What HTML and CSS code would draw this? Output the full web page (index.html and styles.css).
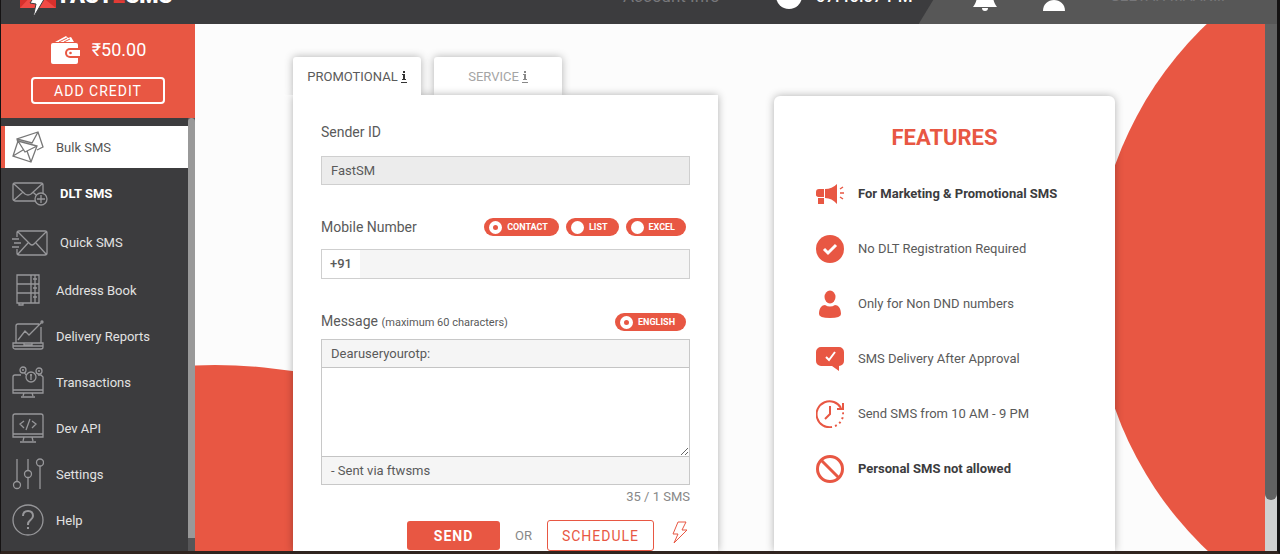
FILE: index.html
```html
<!DOCTYPE html>
<html lang="en">
<head>
<meta charset="utf-8">
<meta name="viewport" content="width=device-width, initial-scale=1">
<title>Fast2SMS - Bulk SMS</title>
<link rel="stylesheet" href="styles.css">
</head>
<body>
<div class="shell">
  <header class="topbar">
    <div class="topbar-inner">
      <a class="brand" href="#">
        <svg class="brand-mark" width="38" height="36" viewBox="0 0 38 36">
          <path d="M1 0h36v26H1z" fill="#d8302c"/>
          <path d="M1 26 14 12l9 3 14 11z" fill="#f04a45"/>
          <path d="M25 0 11 21l6 1-3 14 13-22-5-1 8-13z" fill="#fff" stroke="#3c3c3e"/>
        </svg>
        <span class="brand-name">FAST<span class="brand-accent">2</span>SMS</span>
      </a>
      <div class="status">
        <span class="muted">Account Info</span>
        <span class="clock"><svg width="26" height="26" viewBox="0 0 26 26"><circle cx="13" cy="13" r="13" fill="#fff"/></svg>07:46:57 PM</span>
      </div>
      <div class="account">
        <svg width="26" height="28" viewBox="0 0 26 28"><path d="M13 0c-6 1-8 5-8 10 0 6-1 9-4 13h24c-3-4-4-7-4-13 0-5-2-9-8-10zM10 24h6a3 3 0 0 1-6 0z" fill="#fff"/></svg>
        <svg width="24" height="28" viewBox="0 0 24 28"><circle cx="12" cy="8" r="7" fill="#fff"/><path d="M1 27c0-7 5-11 11-11s11 4 11 11z" fill="#fff"/></svg>
        <span class="muted user">GEETAH MAAN...</span>
      </div>
    </div>
  </header>

  <div class="body">
    <aside class="sidebar">
      <section class="wallet">
        <div class="balance">
          <svg width="30" height="28" viewBox="0 0 30 28">
            <path d="M5 6 16 0l2 2 3-1 3 5z" fill="#fff"/>
            <path d="M9 6l8-4M14 6l6-3" stroke="#e85743" fill="none"/>
            <rect x="1" y="7" width="27" height="21" rx="2" fill="#fff"/>
            <path d="M30 12H20a5 5 0 0 0 0 10h10z" fill="#e85743"/>
            <path d="M30 14H20a3 3 0 0 0 0 6h10z" fill="#fff"/>
            <circle cx="20.500" cy="17" r="1.300" fill="#e85743"/>
          </svg>
          <span>₹50.00</span>
        </div>
        <button class="add-credit" type="button">ADD CREDIT</button>
      </section>
      <div class="nav-wrap">
        <nav class="nav">
          <a class="nav-item active" href="#">
            <svg width="32" height="32" viewBox="0 0 32 32"><path d="M6 12 5 8 26 1l5 15-6 3M5 8l15 4 6-11M6 10l19 5-6 16L1 25zM6 10l7 11 12-6M1 25l10-6M15 20l4 11"/></svg>
            Bulk SMS</a>
          <a class="nav-item tall strong" href="#">
            <svg width="36" height="24" viewBox="0 0 36 24"><path d="M23 19H3a2 2 0 0 1-2-2V3a2 2 0 0 1 2-2h26a2 2 0 0 1 2 2v8M2 2l11 10q3 2 6 0L30 2M2 18l9-8M21 10l3 3"/><circle cx="29" cy="17" r="6"/><path d="M29 13v8M25 17h8"/></svg>
            DLT SMS</a>
          <a class="nav-item tall" href="#">
            <svg width="36" height="26" viewBox="0 0 36 26"><path d="M5 7V3a2 2 0 0 1 2-2h26a2 2 0 0 1 2 2v20a2 2 0 0 1-2 2H7a2 2 0 0 1-2-2v-4M6 2l12 12q2 2 4 0L34 2M6 24l10-11M34 24 24 13M0 9h7M2 13h7M0 17h7"/></svg>
            Quick SMS</a>
          <a class="nav-item" href="#">
            <svg width="32" height="32" viewBox="0 0 32 32"><path d="M5 1h22v28H5zM19 1v28M23 1v28M5 10h22M5 19h22M7 29v2h4v-2M21 5h4M21 14h4M21 23h4"/></svg>
            Address Book</a>
          <a class="nav-item" href="#">
            <svg width="32" height="32" viewBox="0 0 32 32"><path d="M27 4H6a2 2 0 0 0-2 2v17h25V7M1 23h30v4a2 2 0 0 1-2 2H3a2 2 0 0 1-2-2zM1 26h30M12 23v2h8v-2M6 20l7-9 4 4L29 3"/><circle cx="30" cy="2" r="1"/></svg>
            Delivery Reports</a>
          <a class="nav-item" href="#">
            <svg width="32" height="32" viewBox="0 0 32 32"><path d="M9 9H3a2 2 0 0 0-2 2v16h30V11l-2-2h-3M14 9l-2-3M1 24h30M12 27l-1 3M20 27l1 3M9 31h14"/><circle cx="19" cy="11" r="5"/><circle cx="11" cy="4" r="3"/><circle cx="27" cy="5" r="3"/><path d="M19 8v6M18 9h2M10 4h2M26 5h2"/></svg>
            Transactions</a>
          <a class="nav-item" href="#">
            <svg width="32" height="30" viewBox="0 0 32 30"><path d="M3 1h26a2 2 0 0 1 2 2v21H1V3a2 2 0 0 1 2-2zM1 21h30M12 24l-1 4M20 24l1 4M8 29h16M12 8l-4 3 4 4M20 8l4 3-4 4M18 6l-4 11"/></svg>
            Dev API</a>
          <a class="nav-item" href="#">
            <svg width="32" height="32" viewBox="0 0 32 32"><path d="M5 1v23M16 1v11M16 20v11M28 8v23"/><circle cx="5" cy="27" r="3.500"/><circle cx="16" cy="16" r="3.500"/><circle cx="28" cy="4.500" r="3.500"/></svg>
            Settings</a>
          <a class="nav-item" href="#">
            <svg width="32" height="32" viewBox="0 0 32 32"><circle cx="16" cy="16" r="15"/><path d="M11 12q0-5 5-5t5 5c0 4-5 4-5 8v1M16 23v2" stroke-width="2"/></svg>
            Help</a>
        </nav>
        <div class="nav-scroll"><div class="nav-thumb"></div></div>
      </div>
    </aside>

    <main class="main">
      <section class="compose">
        <div class="tabs">
          <button class="tab tab-active" type="button">PROMOTIONAL
            <svg width="6" height="13" viewBox="0 0 6 13"><path d="M2 0h2v2H2zM1 3h3v5h1v1H1V8h1V4H1zM0 11h6v1H0z"/></svg>
          </button>
          <button class="tab" type="button">SERVICE
            <svg width="6" height="13" viewBox="0 0 6 13"><path d="M2 0h2v2H2zM1 3h3v5h1v1H1V8h1V4H1zM0 11h6v1H0z"/></svg>
          </button>
        </div>
        <form class="card form">
          <label class="label" for="sender">Sender ID</label>
          <input class="field sender" id="sender" value="FastSM" readonly>

          <div class="label-row">
            <label class="label" for="mobile">Mobile Number</label>
            <div class="pills">
              <label class="pill"><input type="radio" name="source" checked>CONTACT</label>
              <label class="pill"><input type="radio" name="source">LIST</label>
              <label class="pill"><input type="radio" name="source">EXCEL</label>
            </div>
          </div>
          <div class="phone">
            <span class="code">+91</span>
            <input class="phone-input" id="mobile" type="tel">
          </div>

          <div class="label-row">
            <label class="label" for="message">Message <small>(maximum 60 characters)</small></label>
            <div class="pills">
              <label class="pill"><input type="radio" name="lang" checked>ENGLISH</label>
            </div>
          </div>
          <div class="message">
            <div class="affix">Dearuseryourotp:</div>
            <textarea class="text" id="message"></textarea>
            <div class="affix">- Sent via ftwsms</div>
          </div>
          <div class="counter">35 / 1 SMS</div>
          <div class="actions">
            <button class="btn send" type="button">SEND</button>
            <span class="or">OR</span>
            <button class="btn schedule" type="button">SCHEDULE</button>
            <svg class="bolt" width="16" height="24" viewBox="0 0 16 24"><path d="M6 1h8l-4 8h5L2 22l4-9H1z"/></svg>
          </div>
        </form>
      </section>

      <section class="card features">
        <h2 class="features-title">FEATURES</h2>
        <ul class="feature-list">
          <li class="feature strong">
            <svg width="28" height="28" viewBox="0 0 28 28"><path d="M8 9v8H3a2.500 2.500 0 0 1-3-3v-2q0-3 3-3zM9 9q7 0 12-5v20q-5-6-12-6zM2 18h6v6H2z"/><path d="m24 9 3-2M24 13h4M24 17l3 2" stroke="#e85743" stroke-width="1.500"/></svg>
            For Marketing &amp; Promotional SMS</li>
          <li class="feature">
            <svg width="28" height="28" viewBox="0 0 28 28"><circle cx="14" cy="14" r="14"/><path d="m8 14 4 4 8-8" fill="none" stroke="#fff" stroke-width="3"/></svg>
            No DLT Registration Required</li>
          <li class="feature">
            <svg width="28" height="28" viewBox="0 0 28 28"><ellipse cx="14" cy="7" rx="5.500" ry="6.500"/><path d="M3 24c0-6 3-9 6-9q5 3 10 0c3 0 6 3 6 9q0 4-11 4T3 24z"/></svg>
            Only for Non DND numbers</li>
          <li class="feature">
            <svg width="28" height="28" viewBox="0 0 28 28"><path d="M5 2h18a5 5 0 0 1 5 5v9a5 5 0 0 1-5 5v5l-7-5H5a5 5 0 0 1-5-5V7a5 5 0 0 1 5-5z"/><path d="m10 12 3 3 6-8" fill="none" stroke="#fff" stroke-width="2"/></svg>
            SMS Delivery After Approval</li>
          <li class="feature">
            <svg width="28" height="28" viewBox="0 0 28 28"><g fill="none" stroke="#e85743" stroke-width="2"><path d="M16 27A13 13 0 1 1 25 8"/><path d="M27 3v6h-6M14 6v8l-5 5"/><path d="M19 26A13 13 0 0 0 27 12" stroke-dasharray="2 3"/></g></svg>
            Send SMS from 10 AM - 9 PM</li>
          <li class="feature strong">
            <svg width="28" height="28" viewBox="0 0 28 28"><g fill="none" stroke="#e85743" stroke-width="3"><circle cx="14" cy="14" r="12.500"/><path d="m5 5 18 18"/></g></svg>
            Personal SMS not allowed</li>
        </ul>
      </section>
    </main>

    <div class="page-scroll"><div class="page-thumb"></div></div>
  </div>
</div>
</body>
</html>
```
FILE: styles.css
```css
* { box-sizing: border-box; }

body {
  margin: 0;
  font-family: Roboto, "Liberation Sans", sans-serif;
  font-size: 14px;
  color: #5a5a5a;
  background: #000;
}

button, input, textarea { font: inherit; color: inherit; }
button { cursor: pointer; }
a { text-decoration: none; }
svg { flex: none; display: block; }

.shell {
  height: 100vh;
  display: flex;
  flex-direction: column;
  overflow: hidden;
  border: solid #151313;
  border-width: 0 3px 0 1px;
  border-bottom: 3px solid #30241f;
}

/* Top bar, scrolled partly out of view */
.topbar {
  flex: none;
  height: 24px;
  overflow: hidden;
  background: #3c3c3e;
}
.topbar-inner {
  height: 56px;
  margin-top: -32px;
  display: flex;
  align-items: center;
  color: #fff;
}
.brand {
  flex: 1;
  display: flex;
  align-items: center;
  gap: 3px;
  padding-left: 18px;
  color: #fff;
}
.brand-mark { margin-top: 8px; }
.brand-name { font-size: 22px; line-height: 24px; font-weight: 900; }
.brand-accent { color: #e23b35; }
.status {
  display: flex;
  align-items: center;
  gap: 56px;
  padding-right: 6px;
}
.clock { display: flex; align-items: center; gap: 14px; font-size: 17px; font-weight: 500; }
.muted { color: #77777a; font-size: 17px; }
.muted.user { font-size: 15px; }
.account {
  align-self: stretch;
  display: flex;
  align-items: center;
  gap: 44px;
  padding: 0 52px 0 53px;
  background: #575757;
  clip-path: polygon(34px 0, 100% 0, 100% 100%, 0 100%);
}
.account svg { margin-top: 4px; }

.body { flex: 1; min-height: 0; display: flex; }

/* Sidebar */
.sidebar {
  flex: none;
  width: 194px;
  display: flex;
  flex-direction: column;
  background: #3c3c3e;
}
.wallet {
  flex: none;
  height: 94px;
  padding-top: 12px;
  display: flex;
  flex-direction: column;
  align-items: center;
  gap: 13px;
  background: #e85743;
  color: #fff;
}
.balance { display: flex; align-items: center; gap: 12px; font-size: 18px; line-height: 28px; }
.add-credit {
  width: 134px;
  height: 27px;
  padding: 0;
  border: 2px solid #fff;
  border-radius: 4px;
  background: none;
  font-size: 14px;
  line-height: 22px;
  letter-spacing: 1px;
}
.nav-wrap { flex: 1; min-height: 0; display: flex; overflow: hidden; }
.nav { flex: 1; padding-top: 8px; }
.nav-item {
  height: 46px;
  display: flex;
  align-items: center;
  gap: 12px;
  padding-left: 11px;
  color: #e2e2e2;
  font-size: 13px;
}
.nav-item svg { fill: none; stroke: #97979a; stroke-width: 1.3; }
.nav-item.tall { height: 49px; }
.nav-item.strong { color: #fff; font-weight: 700; }
.nav-item.active {
  height: 42px;
  margin-bottom: 1px;
  padding-left: 7px;
  border-left: 4px solid #e85743;
  background: #fff;
  color: #555;
}
.nav-item.active svg { stroke: #777; }
.nav-scroll { width: 7px; background: #565658; }
.nav-thumb { height: calc(100% - 13px); border-radius: 4px 4px 0 0; background: #999; }

/* Main area */
.main {
  flex: 1;
  position: relative;
  overflow: hidden;
  display: grid;
  grid-template-columns: 425fr 341fr;
  gap: 56px;
  padding: 33px 150px 0 98px;
  background: #fcfcfc;
}
.main::before, .main::after {
  content: "";
  position: absolute;
  border-radius: 50%;
  background: #e85743;
}
.main::before { width: 1000px; height: 1000px; left: -480px; top: 341px; }
.main::after { width: 726px; height: 726px; right: -555px; top: -100px; }

.card {
  background: #fff;
  box-shadow: 0 0 8px rgba(0, 0, 0, 0.3);
}

.compose {
  min-width: 0;
  z-index: 1;
  display: flex;
  flex-direction: column;
}
.tabs { display: flex; gap: 13px; }
.tab {
  width: 128px;
  height: 38px;
  padding: 0;
  display: flex;
  align-items: center;
  justify-content: center;
  gap: 3px;
  border: 0;
  border-radius: 3px 3px 0 0;
  background: #fff;
  box-shadow: 0 0 8px rgba(0, 0, 0, 0.3);
  color: #a5a5a5;
  font-size: 13px;
}
.tab svg { fill: #888; margin-top: 3px; }
.tab-active {
  z-index: 2;
  clip-path: inset(-10px -10px 0 -10px);
  color: #5a5a5a;
}
.tab-active svg { fill: #333; }

.form {
  flex: 1;
  z-index: 1;
  padding: 27px 28px 0;
}
.label { display: block; font-size: 14px; line-height: 20px; }
.label small { font-size: 11px; }
.field {
  display: block;
  width: 100%;
  height: 29px;
  margin-top: 14px;
  padding: 0 9px;
  border: 1px solid #cfcfcf;
  background: #ececec;
  font-size: 13px;
}
.label-row {
  display: flex;
  align-items: center;
  justify-content: space-between;
  margin-top: 32px;
}
.pills { display: flex; gap: 7px; padding-right: 4px; }
.pill {
  height: 18px;
  display: flex;
  align-items: center;
  gap: 5px;
  padding: 0 11px 0 5px;
  border-radius: 9px;
  background: #e85743;
  color: #fff;
  font-size: 9px;
  font-weight: 700;
}
.pill input {
  appearance: none;
  width: 13px;
  height: 13px;
  margin: 0;
  border: 4px solid #fff;
  border-radius: 50%;
  background: #fff;
}
.pill input:checked { background: #e85743; }
.phone {
  display: flex;
  height: 30px;
  margin-top: 12px;
  border: 1px solid #cfcfcf;
  background: #f5f5f5;
}
.code {
  width: 38px;
  padding-left: 8px;
  line-height: 28px;
  background: #fff;
  font-size: 13px;
  font-weight: 500;
}
.phone-input { flex: 1; min-width: 0; border: 0; background: none; }
.message { margin-top: 6px; border: 1px solid #c8c8c8; }
.affix {
  padding-left: 9px;
  background: #f5f5f5;
  font-size: 13px;
  line-height: 27px;
}
.text {
  display: block;
  width: 100%;
  height: 90px;
  border: solid #c4c4c4;
  border-width: 1px 0;
  background: #fff;
  resize: vertical;
}
.counter { margin-top: 3px; text-align: right; font-size: 13px; line-height: 18px; color: #888; }
.actions {
  display: flex;
  align-items: center;
  justify-content: flex-end;
  gap: 15px;
  margin-top: 14px;
  padding-right: 2px;
}
.btn { padding: 0; border-radius: 3px; font-size: 14px; letter-spacing: 1px; }
.send { width: 93px; height: 29px; border: 0; background: #e85743; color: #fff; font-weight: 700; }
.schedule { width: 107px; height: 31px; border: 1px solid #e85743; background: #fff; color: #e85743; }
.or { color: #888; font-size: 13px; }
.bolt { fill: none; stroke: #e85743; stroke-width: 1; margin: -6px 0 0 3px; }

/* Features */
.features {
  min-width: 0;
  z-index: 1;
  margin-top: 39px;
  padding: 28px 20px 0 42px;
  border-radius: 6px 6px 0 0;
}
.features-title {
  margin: 0 22px 14px 0;
  text-align: center;
  color: #e85743;
  font-size: 22px;
  line-height: 28px;
  font-weight: 700;
}
.feature-list { margin: 0; padding: 0; list-style: none; }
.feature {
  height: 55px;
  display: flex;
  align-items: center;
  gap: 14px;
  font-size: 13px;
}
.feature svg { fill: #e85743; }
.feature.strong { color: #3c3c3e; font-weight: 700; }

.page-scroll { flex: none; width: 12px; background: #d0d0d0; }
.page-thumb { height: calc(100% - 51px); border-radius: 0 0 6px 6px; background: #626262; }
```
